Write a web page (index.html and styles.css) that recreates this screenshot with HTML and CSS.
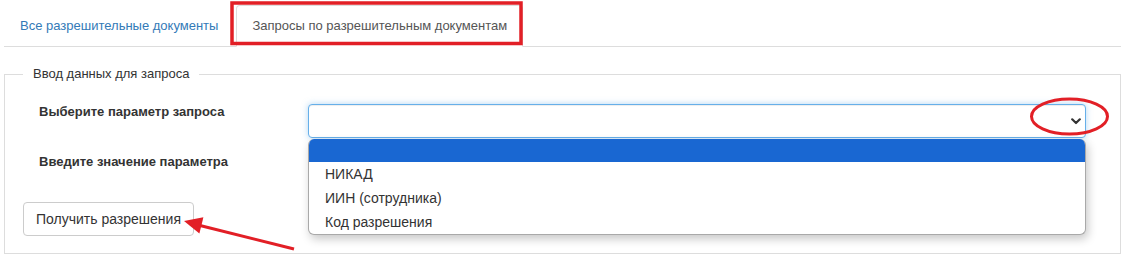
FILE: index.html
```html
<!DOCTYPE html>
<html lang="ru">
<head>
<meta charset="utf-8">
<title>Запросы по разрешительным документам</title>
<link rel="stylesheet" href="styles.css">
</head>
<body>
<div class="page">
  <ul class="tabs">
    <li class="tab"><a href="#">Все разрешительные документы</a></li>
    <li class="tab active"><a href="#">Запросы по разрешительным документам</a></li>
  </ul>

  <fieldset class="box">
    <legend class="box-title">Ввод данных для запроса</legend>

    <div class="form-row">
      <label class="form-label">Выберите параметр запроса</label>
      <div class="field">
        <div class="select focused">
          <svg class="chevron" width="10" height="7" viewBox="0 0 10 7"><path d="M1.2 1.3 L5 5 L8.8 1.3" fill="none" stroke="#333" stroke-width="2.2" stroke-linecap="round" stroke-linejoin="round"/></svg>
        </div>
        <ul class="dropdown">
          <li class="option selected">&nbsp;</li>
          <li class="option">НИКАД</li>
          <li class="option">ИИН (сотрудника)</li>
          <li class="option">Код разрешения</li>
        </ul>
      </div>
    </div>

    <div class="form-row">
      <label class="form-label">Введите значение параметра</label>
      <div class="field">
        <div class="input"></div>
      </div>
    </div>

    <button class="btn" type="button">Получить разрешения</button>
  </fieldset>
</div>

<svg class="annotations" width="1136" height="262" viewBox="0 0 1136 262">
  <rect x="232" y="3" width="289" height="40.5" fill="none" stroke="#e21f26" stroke-width="3.5"/>
  <ellipse cx="1069.5" cy="116.5" rx="38" ry="17.5" fill="none" stroke="#e21f26" stroke-width="3"/>
  <line x1="294" y1="249" x2="198" y2="225" stroke="#e21f26" stroke-width="3"/>
  <polygon points="184,221 203.4,217.2 199.4,233.4" fill="#e21f26"/>
</svg>
</body>
</html>
```

FILE: styles.css
```css
* { box-sizing: border-box; }

html, body {
  margin: 0;
  background: #fff;
}

body {
  font-family: "Liberation Sans", Arial, sans-serif;
  font-size: 14px;
  line-height: 20px;
  color: #333;
  width: 1136px;
  height: 262px;
  overflow: hidden;
  position: relative;
}

.page {
  padding: 0 15px 0 4px;
}

.tabs {
  list-style: none;
  margin: 5px 0 0;
  padding: 0;
  display: flex;
  border-bottom: 1px solid #ddd;
}

.tab {
  margin-bottom: -1px;
  margin-right: 2px;
}

.tab a {
  display: block;
  padding: 10px 15px;
  border: 1px solid transparent;
  border-radius: 4px 4px 0 0;
  color: #337ab7;
  text-decoration: none;
  font-size: 13px;
  line-height: 20px;
}

.tab.active a {
  color: #555;
  background: #fff;
  border-color: #ddd #ddd transparent;
}

.box {
  margin: 17px 0 0;
  padding: 18px 34px 17px 18px;
  border: 1px solid #ddd;
  min-width: 0;
}

.box-title {
  padding: 0 10px;
  line-height: 20px;
  font-size: 13px;
  color: #333;
}

.form-row {
  display: grid;
  grid-template-columns: 269px 1fr;
  padding-left: 16px;
  margin-bottom: 14px;
}

.form-label {
  font-weight: bold;
  font-size: 13px;
  line-height: 20px;
  color: #333;
}

.field {
  position: relative;
  padding-top: 2px;
}

.select,
.input {
  height: 34px;
  border: 1px solid #ccc;
  border-radius: 4px;
  background: #fff;
  box-shadow: inset 0 1px 1px rgba(0, 0, 0, .075);
}

.select {
  display: flex;
  align-items: center;
  justify-content: flex-end;
  padding-right: 4px;
  padding-top: 1px;
}

.select.focused {
  border-color: #66afe9;
  box-shadow: inset 0 1px 1px rgba(0, 0, 0, .075), 0 0 6px rgba(102, 175, 233, .5);
}

.chevron {
  display: block;
}

.dropdown {
  position: absolute;
  left: 0;
  right: 0;
  top: 37px;
  margin: 0;
  padding: 0;
  list-style: none;
  background: #fff;
  border: 1px solid #a9a9a9;
  border-top: 0;
  border-radius: 6px;
  overflow: hidden;
  box-shadow: 2px 4px 10px rgba(0, 0, 0, .22);
  z-index: 5;
}

.option {
  height: 24px;
  line-height: 24px;
  padding-left: 16px;
  font-size: 14px;
  color: #333;
}

.option.selected {
  height: 23px;
  background: #1967d2;
}

.btn {
  display: block;
  margin-top: 0;
  height: 34px;
  padding: 6px 12px;
  font-family: inherit;
  font-size: 14px;
  line-height: 20px;
  color: #333;
  background: #fff;
  border: 1px solid #ccc;
  border-radius: 4px;
}

.annotations {
  position: absolute;
  left: 0;
  top: 0;
  pointer-events: none;
  z-index: 10;
}
```
